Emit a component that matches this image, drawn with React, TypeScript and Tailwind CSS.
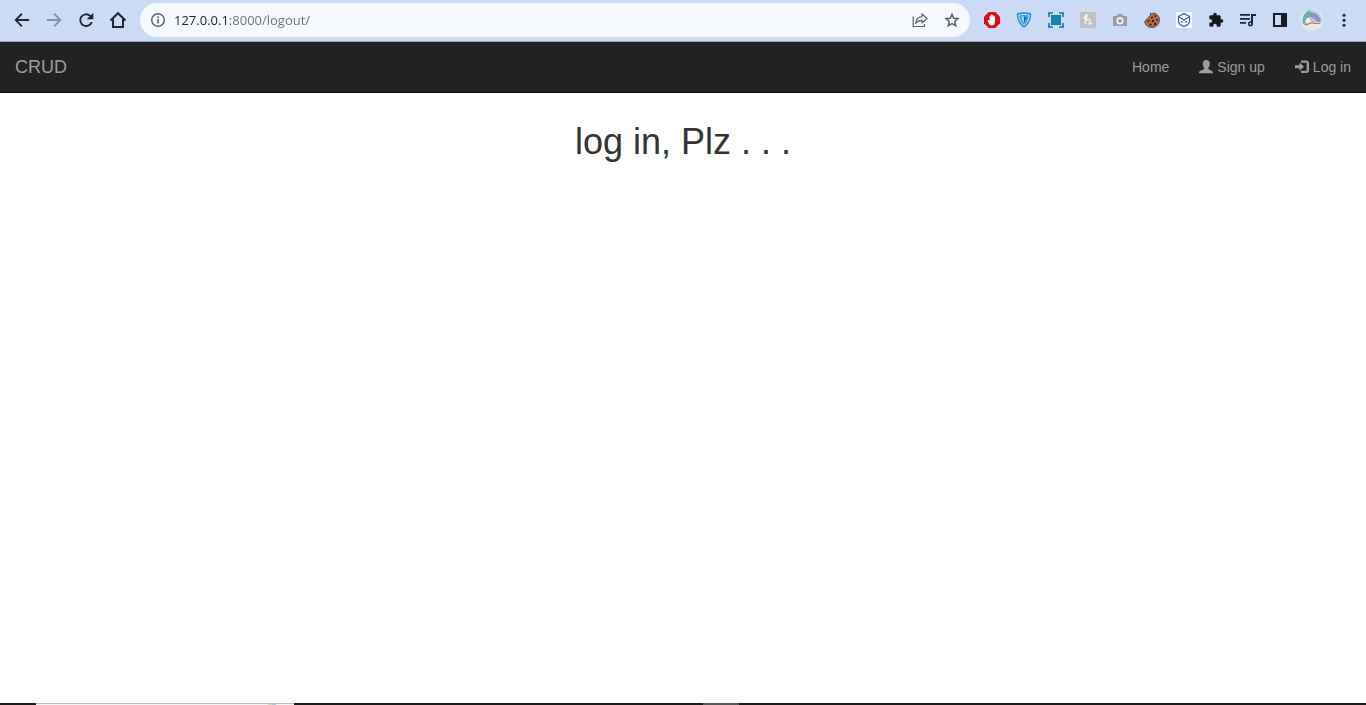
import type { ReactNode } from "react";

const icon = "block size-[18px]";

function ToolButton({ label, children }: { label: string; children: ReactNode }) {
  return (
    <button type="button" aria-label={label} className="flex size-8 shrink-0 items-center justify-center">
      {children}
    </button>
  );
}

function Glyph({ d, className = "text-[#202532]" }: { d: string; className?: string }) {
  return (
    <svg viewBox="0 0 24 24" fill="currentColor" className={`${icon} ${className}`} aria-hidden="true">
      <path d={d} />
    </svg>
  );
}

function Toolbar() {
  return (
    <header className="flex items-center border-b border-[#a3a9b4] bg-[#cbdbf6] px-1.5 pt-[3px] pb-1 font-['Open_Sans',sans-serif]">
      <ToolButton label="Back">
        <Glyph d="M21.500 10.700H6.600l6.200-6.200L11 2.700 1.900 12l9.100 9.300 1.800-1.800-6.200-6.200h14.900z" />
      </ToolButton>
      <ToolButton label="Forward">
        <Glyph className="text-[#8490a5]" d="M2.500 10.700h14.900l-6.200-6.200L13 2.700l9.100 9.300-9.100 9.300-1.800-1.800 6.200-6.200H2.500z" />
      </ToolButton>
      <ToolButton label="Reload">
        <Glyph d="M18.400 5.600A9 9 0 1 0 20.900 14.500h-2.700A6.500 6.500 0 1 1 16.600 7.400L13 11h8.800V2.200z" />
      </ToolButton>
      <ToolButton label="Home page">
        <svg viewBox="0 0 18 18" fill="none" stroke="#202532" strokeWidth="2" className={icon} aria-hidden="true">
          <path d="M1.500 9.500 9 2.200l7.500 7.300M4 8v8h10V8" />
        </svg>
      </ToolButton>

      <div className="mx-1.5 flex h-[34px] min-w-0 flex-1 items-center rounded-full bg-[#f6f9fe] px-0.5">
        <ToolButton label="Site information">
          <svg viewBox="0 0 16 16" className="block size-4" aria-hidden="true">
            <circle cx="8" cy="8" r="6.300" fill="none" stroke="#5f6368" strokeWidth="1.500" />
            <path d="M7.200 7h1.600v4.500H7.200zM7.200 4.300h1.600v1.600H7.200z" fill="#5f6368" />
          </svg>
        </ToolButton>
        <input
          type="text"
          aria-label="Address"
          defaultValue="127.0.0.1:8000/logout/"
          className="h-8 min-w-0 flex-1 bg-[linear-gradient(to_right,#202124_54px,#6b7077_54px)] bg-clip-text text-[13px] text-transparent caret-black outline-none"
        />
        <ToolButton label="Share this page">
          <svg viewBox="0 0 16 16" fill="none" stroke="#5f6368" strokeWidth="1.200" className="block size-4" aria-hidden="true">
            <path d="M1.200 4.500v10h11.300v-2.500" />
            <path d="M10 2v2.600C6 5 4 7.500 3.500 11.500 5.500 9 7.500 8.300 10 8.300V11l5-4.500z" strokeLinejoin="round" />
          </svg>
        </ToolButton>
        <ToolButton label="Bookmark this page">
          <svg viewBox="0 0 16 16" fill="none" stroke="#5a5e64" strokeWidth="1.500" className="block size-4" aria-hidden="true">
            <path d="m8 2.200 1.700 4 4.300.4-3.300 2.900 1 4.200L8 11.500l-3.700 2.200 1-4.200L2 6.600l4.300-.4z" />
          </svg>
        </ToolButton>
      </div>

      <ToolButton label="Ad blocker">
        <svg viewBox="0 0 16 16" className="block size-4" aria-hidden="true">
          <path d="M4.700 0h6.600L16 4.700v6.600L11.300 16H4.700L0 11.300V4.700z" fill="#e20a17" />
          <path d="M3.600 8.200c.9-.4 1.500 0 2 .8V4.100c0-.9 1.100-.9 1.200 0v-1c0-1 1.300-1 1.300 0v.4c.1-.9 1.400-.8 1.400.1v.9c.2-.8 1.500-.7 1.500.2v5c0 2.300-1.200 3.700-3.200 3.700-1.900 0-2.500-1-3.200-2.400z" fill="#fff" />
        </svg>
      </ToolButton>
      <ToolButton label="VPN">
        <svg viewBox="0 0 16 16" className="block size-4" aria-hidden="true">
          <path d="M.8 1.200C5.500 0 10.500 0 15.200 1.200 15.200 7.800 12.700 13 8 15.800 3.300 13 .8 7.800.8 1.200z" fill="#2191d3" />
          <path d="M2.800 3c3.500-.8 6.900-.8 10.400 0-.2 4.700-2 8.200-5.200 10.500C4.800 11.200 3 7.700 2.800 3z" fill="#3ba3df" stroke="#c8e6fa" strokeWidth="1" />
          <path d="M5.800 4.500h4.400c0 2.500-.8 4.700-2.200 6.300-1.400-1.600-2.200-3.800-2.200-6.300z" fill="#c8e6fa" />
          <path d="M7.600 4.500h2.600c0 2.500-.8 4.700-2.200 6.300z" fill="#0b66ae" />
        </svg>
      </ToolButton>
      <ToolButton label="Screen capture">
        <svg viewBox="0 0 16 16" className="block size-4" aria-hidden="true">
          <path d="M1 5V1h4M11 1h4v4M15 11v4h-4M5 15H1v-4" fill="none" stroke="#246d95" strokeWidth="1.600" />
          <path d="M3 3h10v10H3z" fill="#1684ad" />
        </svg>
      </ToolButton>
      <ToolButton label="Coupons">
        <svg viewBox="0 0 16 16" className="block size-4" aria-hidden="true">
          <rect width="16" height="16" rx="1" fill="#c0c0c0" />
          <path d="M3.800 5.800c2 .3 3.500-1 3.200-2.300-.3-1-1.500-.7-1.500.8V12M5.500 9c1-2.500 4.500-3 4.200-.3L9.300 11c-.1 1.500 1.500 1.300 2.400.1" fill="none" stroke="#f4f4f4" strokeWidth="1.500" strokeLinecap="round" />
        </svg>
      </ToolButton>
      <ToolButton label="Camera">
        <svg viewBox="0 0 16 16" className="block size-4" aria-hidden="true">
          <path d="M1 4h3.500L6 2h4l1.500 2H15v10H1z" fill="#999da2" />
          <circle cx="8" cy="8.800" r="2.800" fill="#999" stroke="#f4f5f7" strokeWidth="1.800" />
        </svg>
      </ToolButton>
      <ToolButton label="Cookies">
        <svg viewBox="0 0 16 16" className="block size-4" aria-hidden="true">
          <path d="M6.500.8C7 2.500 8 2.500 9.200.9c3.800.6 6.300 3.400 6.300 7.100A7.400 7.400 0 0 1 8 15.500C4 15.500 1 13 .6 9.300c1.200-.2 1.700-.9 1.600-2.100 1.500 0 2.400-.7 2.200-2.200C6 4.500 6.800 3 6.500.8z" fill="#b06f49" stroke="#5f3726" strokeWidth=".8" />
          <g fill="#351812">
            <circle cx="8" cy="5.500" r="1.100" /><circle cx="11.500" cy="4" r="1" /><circle cx="4.500" cy="9" r="1.100" />
            <circle cx="9" cy="9" r="1.200" /><circle cx="13" cy="8" r="1" /><circle cx="6.500" cy="12.500" r="1.100" />
            <circle cx="11.200" cy="12" r="1.200" />
          </g>
        </svg>
      </ToolButton>
      <ToolButton label="Mail">
        <svg viewBox="0 0 16 16" className="block size-4" aria-hidden="true">
          <rect width="16" height="16" rx="1" fill="#fff" />
          <path d="M8 1.600c2 1 3.800 1.800 5.500 2.600v5.600C12.800 12 10.500 13.800 8 14.500c-2.500-.7-4.800-2.500-5.500-4.700V4.200C4.200 3.400 6 2.600 8 1.600z" fill="none" stroke="#3a5bdc" strokeWidth="1.200" />
          <path d="m2.500 4.500 5.500 3.500 5.500-3.500M4.800 9.800h2M9.200 9.800h2" fill="none" stroke="#3a5bdc" strokeWidth="1.300" />
        </svg>
      </ToolButton>
      <ToolButton label="Extensions">
        <svg viewBox="0 0 24 24" fill="#17191f" className="block size-4" aria-hidden="true">
          <path d="M20.500 11H19V7c0-1.100-.9-2-2-2h-4V3.500a2.500 2.500 0 0 0-5 0V5H4c-1.100 0-2 .9-2 2v3.800h1.500a2.700 2.700 0 0 1 0 5.400H2V20c0 1.100.9 2 2 2h3.800v-1.500a2.700 2.700 0 0 1 5.400 0V22H17c1.100 0 2-.9 2-2v-4h1.500a2.500 2.500 0 0 0 0-5z" />
        </svg>
      </ToolButton>
      <ToolButton label="Media controls">
        <svg viewBox="0 0 18 18" fill="#202532" className={icon} aria-hidden="true">
          <path d="M1 3h10v1.700H1zM1 7h10v1.700H1zM1 11h6v1.700H1z" />
          <path d="M12 3h5v2h-3v7.800h-2z" />
          <circle cx="11.500" cy="12.700" r="1.800" fill="none" stroke="#202532" strokeWidth="1.500" />
        </svg>
      </ToolButton>
      <ToolButton label="Side panel">
        <svg viewBox="0 0 16 16" className="block size-4" aria-hidden="true">
          <path d="M1 1h14v14H1zM3 3v10h6V3z" fill="#17191f" fillRule="evenodd" />
        </svg>
      </ToolButton>
      <ToolButton label="Profile">
        <svg viewBox="0 0 22 22" className="block size-[22px]" aria-hidden="true">
          <circle cx="11" cy="11" r="11" fill="#e9e9e6" />
          <path d="M5 2C11-1.500 19.500 1.500 21.500 12c-1.500 1.300-2.700 1-3.500 0C16.500 7 12 3.500 5 5z" fill="#9be0c9" />
          <path d="M6 3.500C13 2 19 6 20 12.500l-2 .5C16 8 12 5.500 6 6z" fill="#a37fd0" />
          <path d="M6 5.500c6-.5 10 2.500 12 7.300l-2 .5C14 10 11 7.500 6 8z" fill="#6b9bdb" />
          <path d="M5.500 3 9 1.500 8.500 8 11 9l-3 5-6 1C.5 11 2 6 5.500 3z" fill="#62b8a4" />
          <path d="M5.500 9.500 9 8.500l1.500 3L7 14l-3-1z" fill="#fff" />
          <path d="M9 8c3 0 5 2 6 5l-3 1-3-3z" fill="#efacbd" />
          <path d="M3.500 15.500c4 1 5-2 8-1.500s5 1 8 0" fill="none" stroke="#a87f66" strokeWidth="1.200" />
        </svg>
      </ToolButton>
      <ToolButton label="Menu">
        <svg viewBox="0 0 18 18" fill="#202532" className={icon} aria-hidden="true">
          <circle cx="9" cy="4.200" r="1.500" /><circle cx="9" cy="9.200" r="1.500" /><circle cx="9" cy="14.200" r="1.500" />
        </svg>
      </ToolButton>
    </header>
  );
}

function SiteNav() {
  const link = "flex items-center gap-1 px-[15px] py-[15px] text-sm leading-5";
  return (
    <nav className="flex items-center justify-between border-b border-[#080808] bg-[#222] text-[#9d9d9d]">
      <a href="/" className="px-[15px] py-[15px] text-lg leading-5">CRUD</a>
      <ul className="flex">
        <li><a href="/home/" className={link}>Home</a></li>
        <li>
          <a href="/signup/" className={link}>
            <svg viewBox="0 0 14 14" fill="currentColor" className="block size-3.5" aria-hidden="true">
              <path d="M7.300 0c2.200 0 3.500 1.300 3.500 3.300 0 2-.6 3.600-1.500 4.600v1.200c1.500 1.100 4.500 1.700 4.700 3.200v.9H0v-.9c.2-1.500 3.700-2.100 5.300-3.200V7.900c-.9-1-1.500-2.600-1.500-4.600C3.800 1.300 5.100 0 7.300 0z" />
            </svg>
            Sign up
          </a>
        </li>
        <li>
          <a href="/login/" className={link}>
            <svg viewBox="0 0 14 14" fill="currentColor" className="block size-3.5" aria-hidden="true">
              <path d="M6 .4h5.500c1.500 0 2.500 1 2.500 2.500v7.700c0 1.500-1 2.500-2.500 2.500H6v-2.300h5.700V2.700H6zM4.500 2.600 9 6.700l-4.500 4.100V8.200H0V5.300h4.500z" />
            </svg>
            Log in
          </a>
        </li>
      </ul>
    </nav>
  );
}

export default function App() {
  return (
    <div className="flex min-h-screen flex-col bg-white font-['Liberation_Sans',Arial,sans-serif]">
      <Toolbar />
      <SiteNav />
      <main className="flex-1 px-4 pt-[29px]">
        <h1 className="text-center text-4xl leading-10 text-[#333]">log in, Plz . . .</h1>
      </main>
      <footer className="flex h-0.5 bg-[#1b1b1d]">
        <div className="ml-9 flex w-[258px] justify-end border-t border-[#bdbdbd] bg-[#f2f2f2] pr-[18px]">
          <div className="w-1 bg-[#d9dfa0]" />
          <div className="w-1 bg-[#a5cbe8]" />
        </div>
        <div className="ml-[409px] w-9 bg-[#58585a]" />
      </footer>
    </div>
  );
}
